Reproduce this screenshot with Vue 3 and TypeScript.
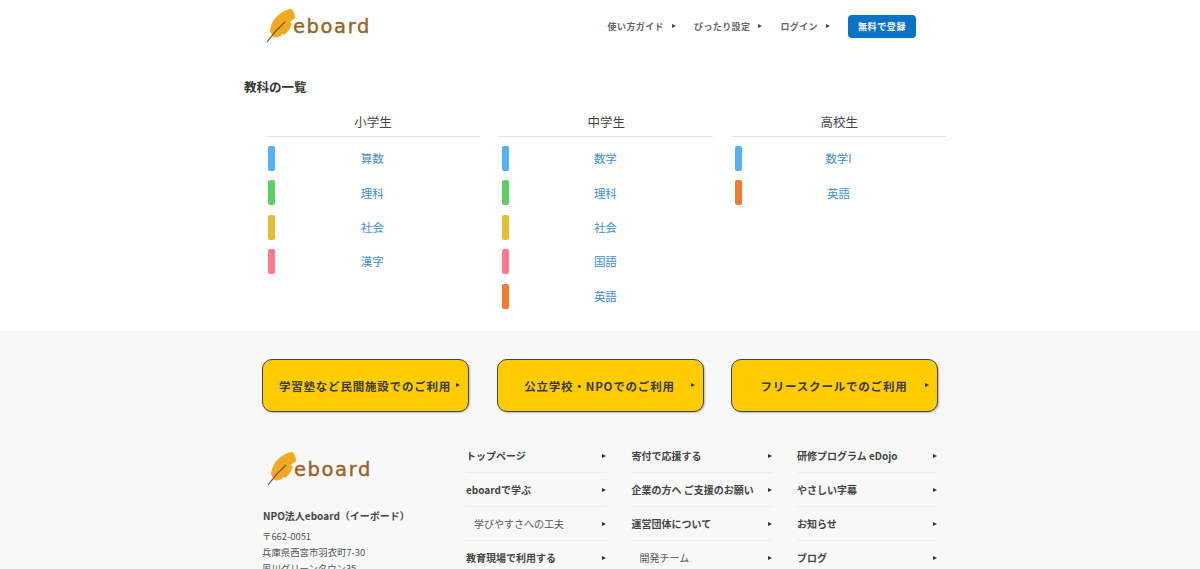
<script setup lang="ts">
interface Subject { name: string; color: string }
const blue = '#55b1f3', green = '#5fcf65', yellow = '#e5bc35', pink = '#fd7a8c', orange = '#ed7d31'
const grades: { title: string; subjects: Subject[] }[] = [
  { title: '小学生', subjects: [
    { name: '算数', color: blue }, { name: '理科', color: green },
    { name: '社会', color: yellow }, { name: '漢字', color: pink } ] },
  { title: '中学生', subjects: [
    { name: '数学', color: blue }, { name: '理科', color: green }, { name: '社会', color: yellow },
    { name: '国語', color: pink }, { name: '英語', color: orange } ] },
  { title: '高校生', subjects: [ { name: '数学I', color: blue }, { name: '英語', color: orange } ] }
]
const nav = ['使い方ガイド', 'ぴったり設定', 'ログイン']
const cta = ['学習塾など民間施設でのご利用', '公立学校・NPOでのご利用', 'フリースクールでのご利用']
const links: { label: string; sub?: boolean }[][] = [
  [ { label: 'トップページ' }, { label: 'eboardで学ぶ' }, { label: '学びやすさへの工夫', sub: true }, { label: '教育現場で利用する' } ],
  [ { label: '寄付で応援する' }, { label: '企業の方へ ご支援のお願い' }, { label: '運営団体について' }, { label: '開発チーム', sub: true } ],
  [ { label: '研修プログラム eDojo' }, { label: 'やさしい字幕' }, { label: 'お知らせ' }, { label: 'ブログ' } ]
]
</script>

<template>
  <div class="page">
    <header class="header">
      <a class="logo">
        <svg class="feather" viewBox="0 0 34 36" width="34" height="36">
          <path d="M4 22 C5 14 9 8 15 4 C18 2 22 0 26 0 C28 3 29 6 29 9 L24 13 L26 15 C24 20 21 24 18 26 L16 25 L15 27 C12 28 9 29 7 28 Z" fill="#eeaa25" />
          <path d="M1 33 C6 26 11 20 19 13" stroke="#8a4a22" stroke-width="1.2" fill="none" />
        </svg>
        <span class="word">eboard</span>
      </a>
      <nav class="nav">
        <a v-for="n in nav" :key="n" class="nav-item">{{ n }}<i class="tri"></i></a>
        <a class="register">無料で登録</a>
      </nav>
    </header>

    <main class="main">
      <h1 class="title">教科の一覧</h1>
      <div class="grades">
        <section v-for="g in grades" :key="g.title" class="grade">
          <h2 class="grade-title">{{ g.title }}</h2>
          <a v-for="s in g.subjects" :key="s.name" class="subject">
            <span class="bar" :style="{ background: s.color }"></span>
            <span class="subject-name">{{ s.name }}</span>
          </a>
        </section>
      </div>
    </main>

    <footer class="footer">
      <div class="cta-row">
        <a v-for="c in cta" :key="c" class="cta">
          <span class="cta-label">{{ c }}</span><i class="tri dark"></i>
        </a>
      </div>
      <div class="foot-body">
        <div class="org">
          <a class="logo foot-logo">
            <svg class="feather" viewBox="0 0 34 36" width="34" height="36">
              <path d="M4 22 C5 14 9 8 15 4 C18 2 22 0 26 0 C28 3 29 6 29 9 L24 13 L26 15 C24 20 21 24 18 26 L16 25 L15 27 C12 28 9 29 7 28 Z" fill="#eeaa25" />
              <path d="M1 33 C6 26 11 20 19 13" stroke="#8a4a22" stroke-width="1.2" fill="none" />
            </svg>
            <span class="word">eboard</span>
          </a>
          <p class="org-name">NPO法人eboard（イーボード）</p>
          <p class="addr">〒662-0051<br />兵庫県西宮市羽衣町7-30<br />夙川グリーンタウン35</p>
        </div>
        <div class="link-cols">
          <ul v-for="(col, i) in links" :key="i" class="link-col">
            <li v-for="l in col" :key="l.label" class="link" :class="{ sub: l.sub }">
              <span>{{ l.label }}</span><i class="tri dark"></i>
            </li>
          </ul>
        </div>
      </div>
    </footer>
  </div>
</template>

<style>
html, body { margin: 0; overflow: hidden; background: #fff; }
</style>

<style scoped>
.page {
  width: 1200px;
  height: 569px;
  overflow: hidden;
  font-family: "Noto Sans CJK JP", "Noto Sans", sans-serif;
  color: #333;
}
.header {
  width: 650px;
  height: 54px;
  margin: 0 0 0 266px;
  display: flex;
  align-items: center;
  justify-content: space-between;
}
.logo { display: flex; align-items: center; height: 36px; width: 104px; }
.feather { flex: none; }
.word {
  margin-left: -7px;
  font-family: "DejaVu Sans", sans-serif;
  font-size: 19.5px;
  line-height: 30px;
  color: #94642a;
  letter-spacing: 1.6px;
  -webkit-text-stroke: 0.4px #94642a;
}
.nav { display: flex; align-items: center; margin-bottom: 2px; }
.nav-item {
  display: flex;
  align-items: center;
  font-size: 9px;
  font-weight: 700;
  letter-spacing: 0.4px;
  color: #666;
  margin-right: 18px;
}
.tri {
  display: inline-block;
  width: 0;
  height: 0;
  margin-left: 8px;
  border-left: 4px solid #444;
  border-top: 2.5px solid transparent;
  border-bottom: 2.5px solid transparent;
}
.register {
  width: 68px;
  height: 23px;
  border-radius: 4px;
  background: #0b73c4;
  color: #fff;
  font-size: 9px;
  font-weight: 700;
  letter-spacing: 0.6px;
  line-height: 23px;
  text-align: center;
}
.main { width: 720px; margin: 0 0 0 244px; height: 277px; }
.title {
  margin: 0;
  padding-top: 23px;
  font-size: 12.5px;
  font-weight: 700;
  line-height: 20px;
  color: #333;
}
.grades { display: flex; gap: 19.2px; margin: 14px 0 0 22px; }
.grade { width: 214px; }
.grade-title {
  margin: 0 0 9px;
  padding-bottom: 3px;
  height: 22px;
  box-sizing: content-box;
  border-bottom: 1px solid #e3e3e3;
  font-size: 12.5px;
  font-weight: 400;
  line-height: 22px;
  text-align: center;
  color: #444;
}
.subject {
  display: flex;
  align-items: center;
  height: 25px;
  margin-bottom: 9.4px;
  padding-left: 2.4px;
}
.bar { width: 7px; height: 25px; border-radius: 2px; flex: none; }
.subject-name {
  flex: 1;
  margin: 0 11px 0.5px 0;
  text-align: center;
  font-size: 11.5px;
  color: #3f8bcf;
}
.footer { background: #f8f8f8; height: 238px; padding-top: 28px; box-sizing: border-box; }
.cta-row { display: flex; gap: 27.5px; margin-left: 262px; }
.cta {
  position: relative;
  width: 207px;
  height: 53px;
  box-sizing: border-box;
  display: flex;
  align-items: center;
  padding-right: 1px;
  border: 1.5px solid #444;
  border-radius: 10px;
  background: #ffcc00;
  box-shadow: 1px 1px 2px rgba(0, 0, 0, 0.25);
  font-size: 11.5px;
  font-weight: 700;
  letter-spacing: 0.8px;
  color: #3a3a3a;
}
.cta-label { flex: 1; text-align: center; white-space: nowrap; }
.cta .tri { position: absolute; right: 8px; top: 23px; margin: 0; border-left-color: #333; }
.foot-body { display: flex; margin: 40px 0 0 262px; }
.org { width: 204px; }
.foot-logo { margin: 0 0 0 5px; }
.org-name {
  margin: 20px 0 0 1px;
  font-size: 10px;
  font-weight: 700;
  line-height: 16px;
  color: #444;
  white-space: nowrap;
}
.addr { margin: 4px 0 0; font-size: 9.4px; line-height: 16px; color: #555; white-space: nowrap; }
.link-cols { display: flex; gap: 24.5px; margin-top: -13px; }
.link-col { width: 141px; margin: 0; padding: 0; list-style: none; }
.link {
  display: flex;
  align-items: center;
  justify-content: space-between;
  height: 34px;
  box-sizing: border-box;
  padding-right: 1px;
  border-bottom: 1px solid #eee;
  font-size: 10px;
  font-weight: 700;
  color: #444;
  white-space: nowrap;
}
.link.sub { padding-left: 8px; font-weight: 400; color: #555; }
.link .tri { margin: 0; border-left-color: #333; }
</style>
